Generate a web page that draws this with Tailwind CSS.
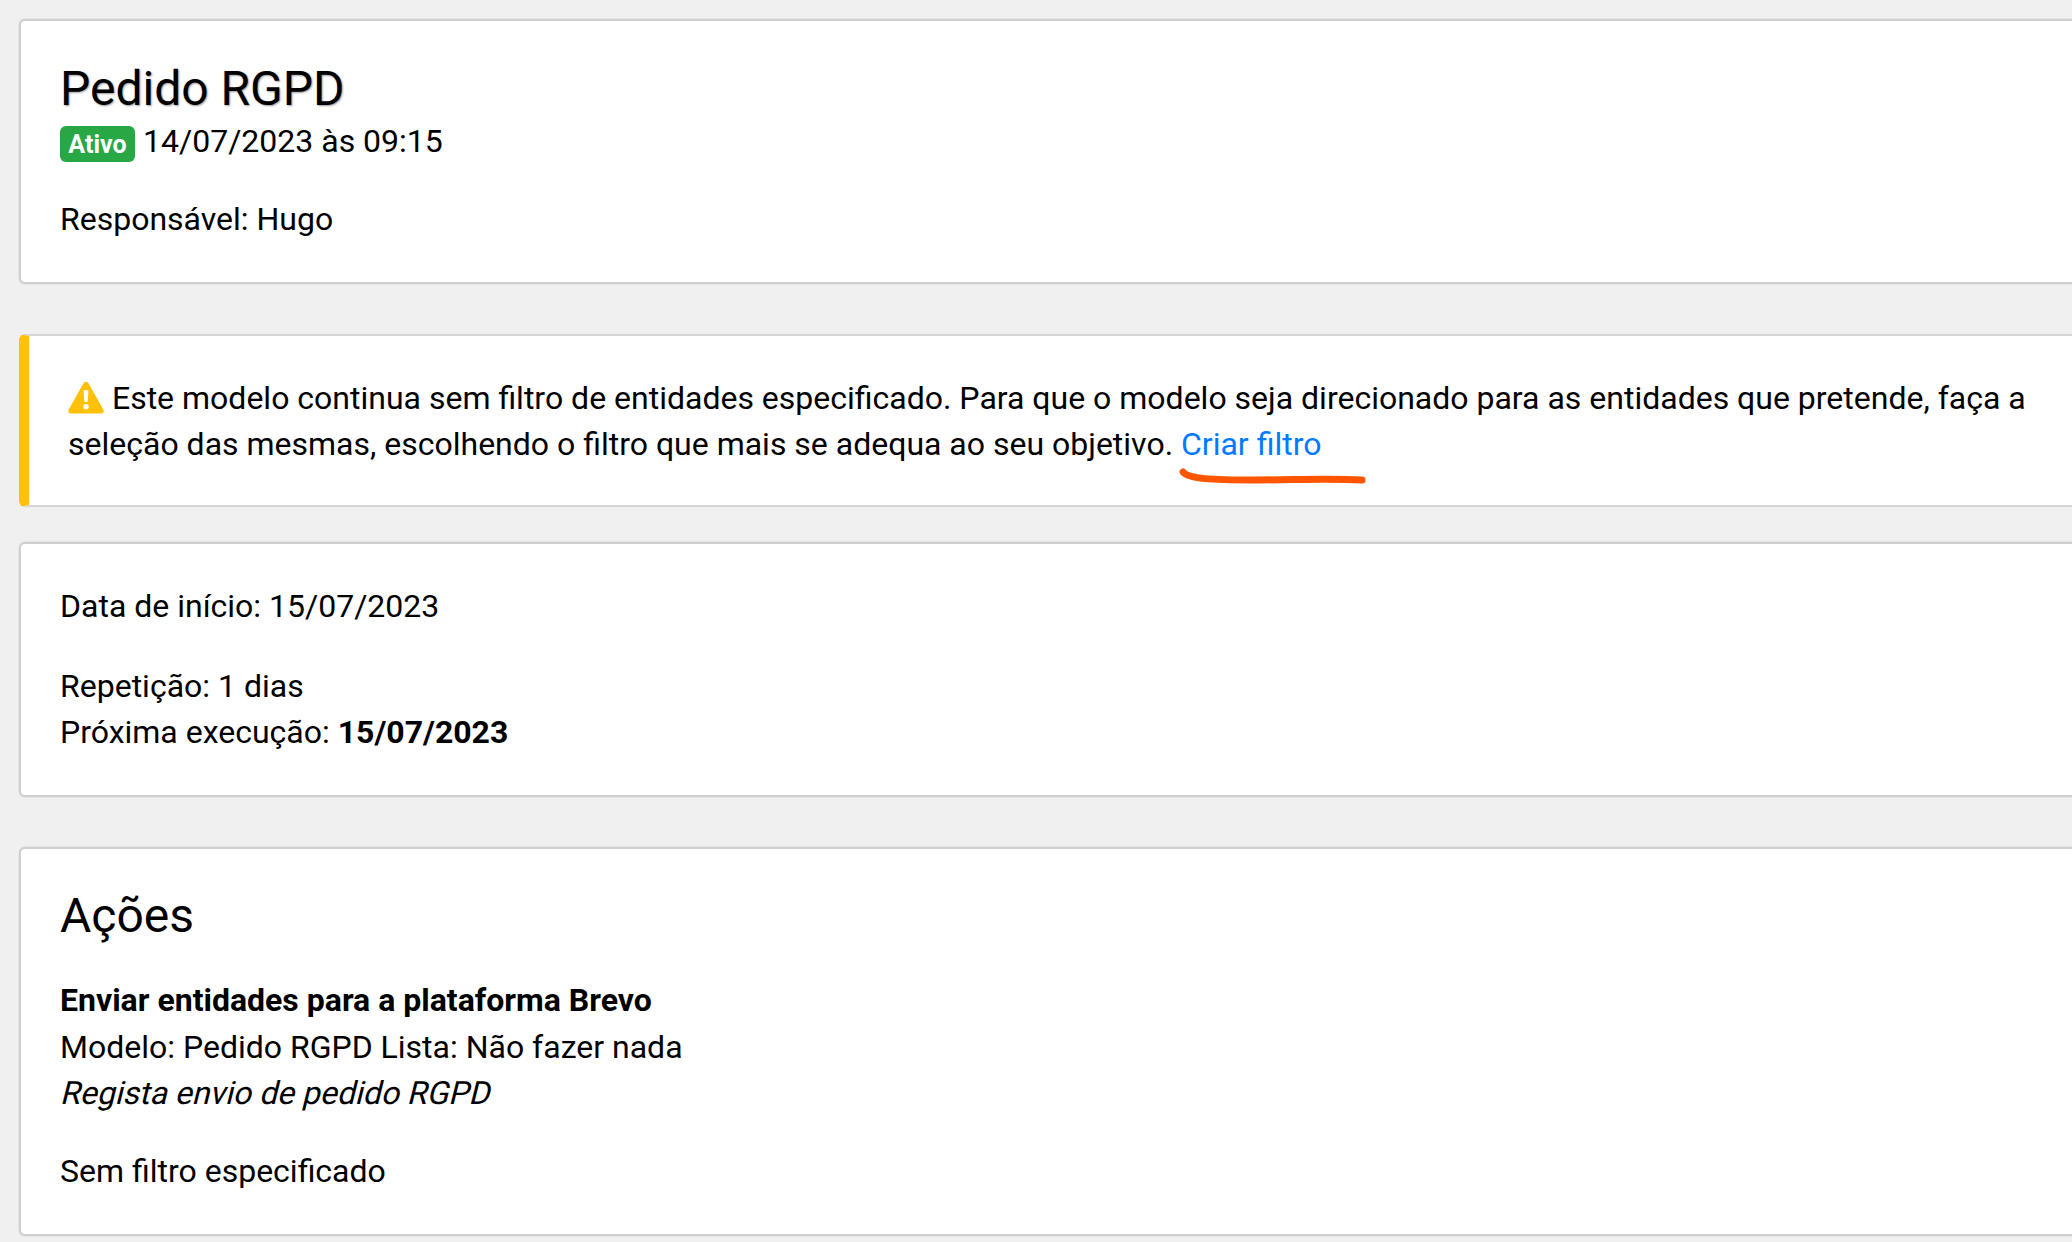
<!DOCTYPE html>
<html lang="pt">
<head>
    <meta charset="UTF-8">
    <title>Pedido RGPD</title>
    <script src="https://cdn.jsdelivr.net/npm/@tailwindcss/browser@4"></script>
</head>
<body class="bg-[#f0f0f0] h-[1242px] w-[2072px] overflow-hidden font-['Roboto',sans-serif] text-[32px] leading-[46px] text-black">
    <div class="w-[2120px] ml-[19px] pt-[19px]">

        <!-- Header card -->
        <div class="h-[265px] bg-white rounded-[6px] border-2 border-[#cfcfcf] shadow-[0_0_2px_rgba(0,0,0,0.15)] pl-[39px] pt-[40px]">
            <h1 class="text-[48px] leading-[56px] [text-shadow:1px_1px_2px_#999]">Pedido RGPD</h1>
            <div class="flex items-start h-[46px] mt-[4px]">
                <span class="mt-[5px] w-[75px] h-[36px] rounded-[6px] bg-[#28a745] text-white font-bold text-[25px] leading-[37px] text-center">Ativo</span>
                <span class="ml-[8px] -mt-[3px]">14/07/2023 às 09:15</span>
            </div>
            <p class="mt-[29px]">Responsável: Hugo</p>
        </div>

        <!-- Warning -->
        <div class="mt-[50px] h-[173px] bg-white rounded-[6px] border-y-2 border-y-[#d5d5d5] border-l-[10px] border-l-[#ffc107] pl-[39px] pt-[39px] w-full">
            <p class="w-[2010px]">
                <svg class="inline-block align-[-5px] w-[36px] h-[33px]" viewBox="0 0 37 33"><path fill="#ffc107" d="M15.8 2a3.1 3.1 0 0 1 5.4 0l15.2 27a2.7 2.7 0 0 1-2.4 4H3a2.7 2.7 0 0 1-2.4-4z"/><path fill="#fff" d="M16 9h5l-.8 12h-3.4z"/><circle fill="#fff" cx="18.5" cy="26" r="2.8"/></svg>
                Este modelo continua sem filtro de entidades especificado. Para que o modelo seja direcionado para as entidades que pretende, faça a<br>seleção das mesmas, escolhendo o filtro que mais se adequa ao seu objetivo. <a href="#" class="text-[#007bff]">Criar filtro</a>
            </p>
        </div>

        <!-- Schedule card -->
        <div class="mt-[35px] h-[255px] bg-white rounded-[6px] border-2 border-[#cfcfcf] shadow-[0_0_2px_rgba(0,0,0,0.15)] pl-[39px] pt-[39px]">
            <p>Data de início: 15/07/2023</p>
            <p class="mt-[34px]">Repetição: 1 dias</p>
            <p>Próxima execução: <strong class="font-bold">15/07/2023</strong></p>
        </div>

        <!-- Actions card -->
        <div class="mt-[50px] h-[389px] bg-white rounded-[6px] border-2 border-[#cfcfcf] shadow-[0_0_2px_rgba(0,0,0,0.15)] pl-[39px] pt-[39px]">
            <h2 class="text-[48px] leading-[56px]">Ações</h2>
            <p class="mt-[33px] font-bold">Enviar entidades para a plataforma Brevo</p>
            <p class="mt-[1px]">Modelo: Pedido RGPD Lista: Não fazer nada</p>
            <p class="inline-block -skew-x-[14deg] origin-[0_33px]">Regista envio de pedido RGPD</p>
            <p class="mt-[32px]">Sem filtro especificado</p>
        </div>
    </div>

    <!-- Hand drawn underline over the link -->
    <svg class="absolute left-[1170px] top-[460px]" width="210" height="30" viewBox="0 0 210 30"><path d="M13 12c5 7 30 8 70 8s75-2 109 0" fill="none" stroke="#ff5500" stroke-width="7" stroke-linecap="round"/></svg>
</body>
</html>
